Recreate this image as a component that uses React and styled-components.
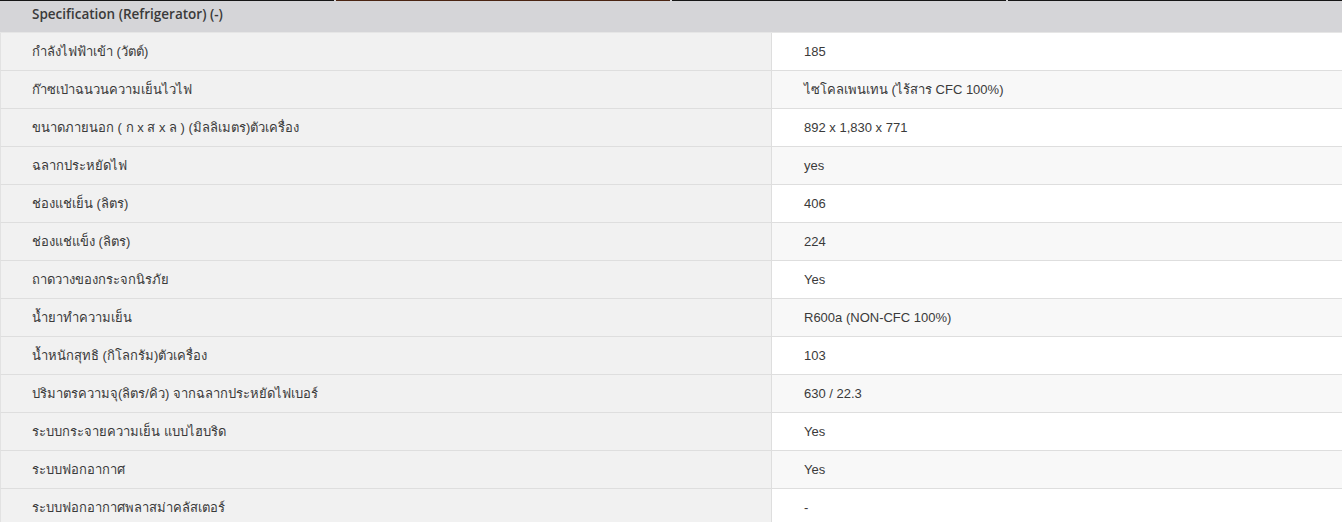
import React from 'react';
import styled, { createGlobalStyle } from 'styled-components';

const specs = [
  ['กำลังไฟฟ้าเข้า (วัตต์)', '185'],
  ['ก๊าซเป่าฉนวนความเย็นไวไฟ', 'ไซโคลเพนเทน (ไร้สาร CFC 100%)'],
  ['ขนาดภายนอก ( ก x ส x ล ) (มิลลิเมตร)ตัวเครื่อง', '892 x 1,830 x 771'],
  ['ฉลากประหยัดไฟ', 'yes'],
  ['ช่องแช่เย็น (ลิตร)', '406'],
  ['ช่องแช่แข็ง (ลิตร)', '224'],
  ['ถาดวางของกระจกนิรภัย', 'Yes'],
  ['น้ำยาทำความเย็น', 'R600a (NON-CFC 100%)'],
  ['น้ำหนักสุทธิ (กิโลกรัม)ตัวเครื่อง', '103'],
  ['ปริมาตรความจุ(ลิตร/คิว) จากฉลากประหยัดไฟเบอร์', '630 / 22.3'],
  ['ระบบกระจายความเย็น แบบไฮบริด', 'Yes'],
  ['ระบบฟอกอากาศ', 'Yes'],
  ['ระบบฟอกอากาศพลาสม่าคลัสเตอร์', '-'],
];

const tabs = [false, true, false, false];

const App = () => {
  return (
    <>
      <GlobalStyle />
      <Page>
        <TabEdges>
          {tabs.map((active, i) => (
            <TabEdge key={i} $active={active} />
          ))}
        </TabEdges>
        <SpecTable>
          <HeaderCell>Specification (Refrigerator) (-)</HeaderCell>
          {specs.map(([label, value], i) => (
            <React.Fragment key={label}>
              <LabelCell>{label}</LabelCell>
              <ValueCell $striped={i % 2 === 1}>{value}</ValueCell>
            </React.Fragment>
          ))}
        </SpecTable>
      </Page>
    </>
  );
};

export default App;

const GlobalStyle = createGlobalStyle`
  body {
    margin: 0;
    background: #ffffff;
    font-family: 'Liberation Sans', 'Noto Sans', sans-serif;
    color: #3a3a3a;
  }
`;

const Page = styled.div`
  width: 1342px;
  height: 522px;
  overflow: hidden;
  background: #d5d5d8;
`;

const TabEdges = styled.div`
  display: flex;
  gap: 2px;
  height: 1px;
`;

const TabEdge = styled.div`
  flex: 1;
  background: ${({ $active }) => ($active ? '#4a2412' : '#161616')};
`;

const SpecTable = styled.div`
  display: grid;
  grid-template-columns: 771px 1fr;
`;

const HeaderCell = styled.div`
  grid-column: 1 / -1;
  height: 32px;
  padding: 4px 32px 0;
  box-sizing: border-box;
  background: #d5d5d8;
  border-bottom: 1px solid #e6e6e6;
  font-family: 'Open Sans', 'Liberation Sans', sans-serif;
  font-size: 13.5px;
  font-weight: 600;
  color: #3a3a3a;
`;

const Cell = styled.div`
  height: 38px;
  box-sizing: border-box;
  display: flex;
  align-items: center;
  padding: 0 32px;
  font-size: 13px;
  color: #3a3a3a;
  border-bottom: 1px solid #dedede;
`;

const LabelCell = styled(Cell)`
  background: #f1f1f1;
  border-left: 1px solid #e2e2e2;
  padding-left: 31px;
`;

const ValueCell = styled(Cell)`
  background: ${({ $striped }) => ($striped ? '#f8f8f8' : '#ffffff')};
  border-left: 1px solid #dedede;
`;
